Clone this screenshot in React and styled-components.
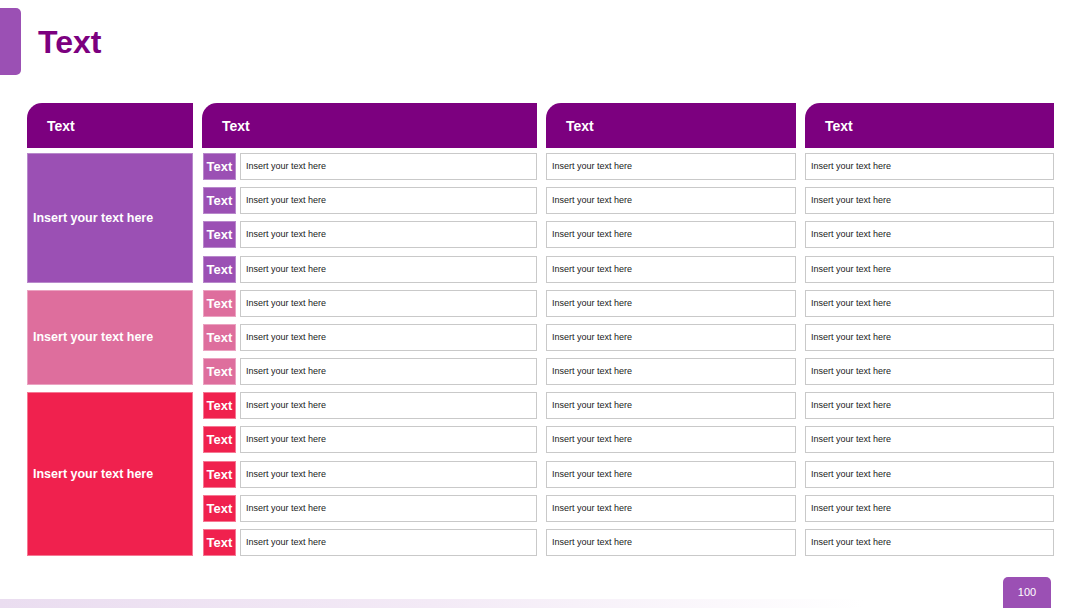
import React from 'react'
import styled, { createGlobalStyle } from 'styled-components'

const GlobalStyle = createGlobalStyle`
  html, body {
    margin: 0;
    padding: 0;
    background: #ffffff;
  }
  body {
    font-family: "Liberation Sans", Arial, sans-serif;
  }
`

const groups = [
  { color: '#9B50B4', edge: '#B888CB', rows: 4 },
  { color: '#DE6E9D', edge: '#EBA3C1', rows: 3 },
  { color: '#F0214E', edge: '#F57893', rows: 5 },
]

const headers = ['Text', 'Text', 'Text', 'Text']

function App() {
  let row = 1
  const cells = []

  groups.forEach((g, gi) => {
    cells.push(
      <GroupCell key={'g' + gi} $start={row} $span={g.rows} $color={g.color} $edge={g.edge}>
        Insert your text here
      </GroupCell>
    )
    for (let i = 0; i < g.rows; i++) {
      const r = row + i
      cells.push(
        <LabelRow key={'l' + r} $row={r}>
          <Label $color={g.color} $edge={g.edge}>Text</Label>
          <TextBox>Insert your text here</TextBox>
        </LabelRow>
      )
      cells.push(
        <TextBox key={'a' + r} $row={r} $col={3}>Insert your text here</TextBox>
      )
      cells.push(
        <TextBox key={'b' + r} $row={r} $col={4}>Insert your text here</TextBox>
      )
    }
    row += g.rows
  })

  return (
    <>
      <GlobalStyle />
      <Page>
        <TopBar>
          <Accent />
          <Title>Text</Title>
        </TopBar>

        <HeaderRow>
          {headers.map((h, i) => (
            <HeaderCell key={i}>{h}</HeaderCell>
          ))}
        </HeaderRow>

        <Body>{cells}</Body>

        <Footer>
          <PageNumber>100</PageNumber>
        </Footer>
      </Page>
    </>
  )
}

export default App

const COLUMNS = '166px 335px 250px 249px'

const Page = styled.div`
  width: 1080px;
  height: 608px;
  overflow: hidden;
  display: flex;
  flex-direction: column;
  background: #ffffff;
`

const TopBar = styled.div`
  height: 103px;
  display: flex;
  align-items: flex-start;
  flex-shrink: 0;
`

const Accent = styled.div`
  width: 21px;
  height: 67px;
  margin-top: 8px;
  background: #9B50B4;
  border-radius: 0 5px 5px 0;
`

const Title = styled.h1`
  margin: 26px 0 0 17px;
  font-size: 32px;
  line-height: 32px;
  font-weight: bold;
  color: #7C007F;
`

const HeaderRow = styled.div`
  display: grid;
  grid-template-columns: ${COLUMNS};
  column-gap: 9px;
  padding-left: 27px;
  height: 45px;
  margin-bottom: 5px;
  flex-shrink: 0;
`

const HeaderCell = styled.div`
  background: #7C007F;
  border-radius: 15px 0 0 0;
  color: #ffffff;
  font-weight: bold;
  font-size: 14px;
  display: flex;
  align-items: center;
  padding-left: 20px;
  padding-top: 1px;
`

const Body = styled.div`
  display: grid;
  grid-template-columns: ${COLUMNS};
  grid-template-rows: repeat(12, 27px);
  column-gap: 9px;
  row-gap: 7.18px;
  padding-left: 27px;
  flex-shrink: 0;
`

const GroupCell = styled.div`
  grid-column: 1;
  grid-row: ${(p) => p.$start} / span ${(p) => p.$span};
  background: ${(p) => p.$color};
  border: 1px solid ${(p) => p.$edge};
  color: #ffffff;
  font-weight: bold;
  font-size: 12.5px;
  display: flex;
  align-items: center;
  padding-left: 5px;
`

const LabelRow = styled.div`
  grid-column: 2;
  grid-row: ${(p) => p.$row};
  display: flex;
  gap: 4px;
  padding-left: 1px;
`

const Label = styled.div`
  width: 33px;
  flex-shrink: 0;
  box-sizing: border-box;
  background: ${(p) => p.$color};
  border: 1px solid ${(p) => p.$edge};
  color: #ffffff;
  font-weight: bold;
  font-size: 13px;
  display: flex;
  align-items: center;
  justify-content: center;
`

const TextBox = styled.div`
  grid-column: ${(p) => p.$col || 'auto'};
  grid-row: ${(p) => p.$row || 'auto'};
  flex: 1;
  box-sizing: border-box;
  background: #ffffff;
  border: 1px solid #C9C9C9;
  color: #1a1a1a;
  font-size: 9px;
  display: flex;
  align-items: center;
  padding-left: 5px;
  padding-bottom: 1px;
  white-space: nowrap;
`

const Footer = styled.div`
  margin-top: auto;
  height: 31px;
  flex-shrink: 0;
  display: flex;
  justify-content: flex-end;
  padding-right: 29px;
  background: linear-gradient(to right, #EADDF0 0%, #F3EAF6 40%, rgba(255, 255, 255, 0) 80%) no-repeat left bottom / 100% 9px;
`

const PageNumber = styled.div`
  width: 48px;
  height: 31px;
  background: #9B50B4;
  border-radius: 5px 5px 0 0;
  color: #ffffff;
  font-size: 11px;
  display: flex;
  align-items: center;
  justify-content: center;
  padding-bottom: 1px;
  box-sizing: border-box;
`
